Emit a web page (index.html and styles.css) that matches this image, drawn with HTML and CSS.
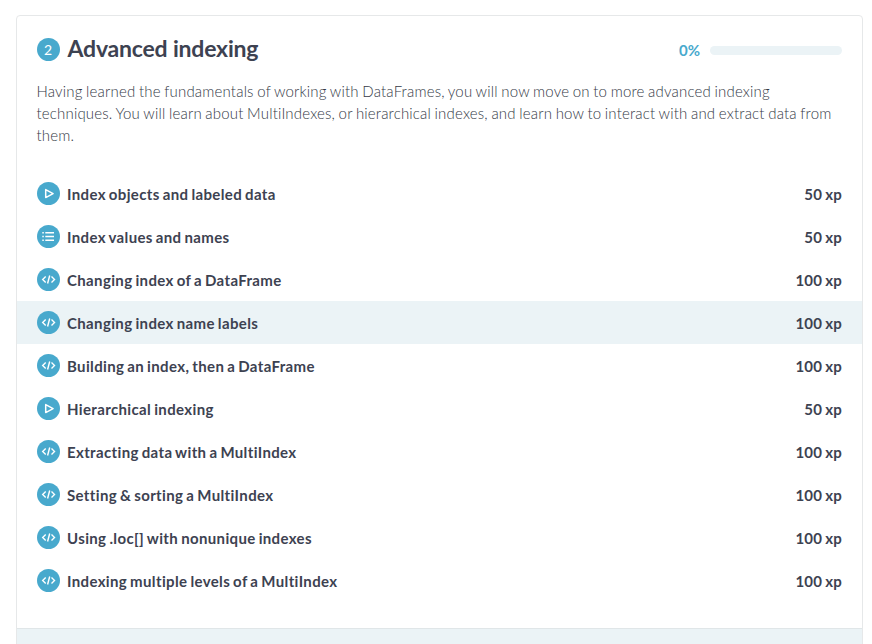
FILE: index.html
```html
<!DOCTYPE html>
<html lang="en">
<head>
<meta charset="utf-8">
<title>Advanced indexing</title>
<link rel="stylesheet" href="styles.css">
</head>
<body>
<svg class="defs" aria-hidden="true">
<symbol id="play" viewBox="0 0 23 23"><circle cx="11.5" cy="11.5" r="11.5" fill="#48a9cd"/><path d="M8.7 7.6v8l7.4-4z" fill="none" stroke="#fff" stroke-width="1.5" stroke-linejoin="round"/></symbol>
<symbol id="list" viewBox="0 0 23 23"><circle cx="11.5" cy="11.5" r="11.5" fill="#48a9cd"/><path d="M5.3 7.7h1.5M8.3 7.7h8.7M5.3 11.5h1.5M8.3 11.5h8.7M5.3 15.3h1.5M8.3 15.3h8.7" fill="none" stroke="#fff" stroke-width="1.5"/></symbol>
<symbol id="code" viewBox="0 0 23 23"><circle cx="11.5" cy="11.5" r="11.5" fill="#48a9cd"/><path d="M8.7 8.6l-3 2.9 3 2.9M14.5 8.6l3 2.9-3 2.9M12.7 7.5l-2.1 8" fill="none" stroke="#fff" stroke-width="1.4"/></symbol>
</svg>
<main class="chapter">
<header class="head"><span class="number">2</span><h1>Advanced indexing</h1><span class="percent">0%</span><span class="track"></span></header>
<p class="intro">Having learned the fundamentals of working with DataFrames, you will now move on to more advanced indexing techniques. You will learn about MultiIndexes, or hierarchical indexes, and learn how to interact with and extract data from them.</p>
<ul class="lessons">
<li><svg class="icon"><use href="#play"/></svg><span class="name">Index objects and labeled data</span><span class="xp">50 xp</span></li>
<li><svg class="icon"><use href="#list"/></svg><span class="name">Index values and names</span><span class="xp">50 xp</span></li>
<li><svg class="icon"><use href="#code"/></svg><span class="name">Changing index of a DataFrame</span><span class="xp">100 xp</span></li>
<li class="active"><svg class="icon"><use href="#code"/></svg><span class="name">Changing index name labels</span><span class="xp">100 xp</span></li>
<li><svg class="icon"><use href="#code"/></svg><span class="name">Building an index, then a DataFrame</span><span class="xp">100 xp</span></li>
<li><svg class="icon"><use href="#play"/></svg><span class="name">Hierarchical indexing</span><span class="xp">50 xp</span></li>
<li><svg class="icon"><use href="#code"/></svg><span class="name">Extracting data with a MultiIndex</span><span class="xp">100 xp</span></li>
<li><svg class="icon"><use href="#code"/></svg><span class="name">Setting &amp; sorting a MultiIndex</span><span class="xp">100 xp</span></li>
<li><svg class="icon"><use href="#code"/></svg><span class="name">Using .loc[] with nonunique indexes</span><span class="xp">100 xp</span></li>
<li><svg class="icon"><use href="#code"/></svg><span class="name">Indexing multiple levels of a MultiIndex</span><span class="xp">100 xp</span></li>
</ul>
<footer class="foot"></footer>
</main>
</body>
</html>
```
FILE: styles.css
```css
* { box-sizing: border-box; }
body { margin: 0; background: #fff; color: #3d4251; font-family: Lato, "Liberation Sans", sans-serif; overflow: hidden; }
.defs { display: none; }
.chapter { display: flex; flex-direction: column; width: 847px; height: 660px; margin: 15px 0 0 16px; border: 1px solid #e6e8e9; border-radius: 4px; }
.head { display: flex; align-items: center; height: 30px; margin: 18px 20px 0; }
.number { width: 23px; height: 23px; border-radius: 50%; background: #48a9cd; color: #fff; font-size: 14px; line-height: 23px; text-align: center; padding-right: 1px; }
h1 { flex: 1; margin: -2px 0 0 7.5px; font-size: 23px; line-height: 30px; font-weight: 700; letter-spacing: -0.19px; }
.percent { margin: 2px 10px 0 0; color: #48a9cd; font-size: 15px; font-weight: 700; }
.track { width: 132px; height: 9px; margin-top: 2px; border-radius: 5px; background: #ebf3f6; }
.intro { margin: 16px 11px 0 19.5px; padding-right: 8px; color: #343946; font-size: 15px; line-height: 22px; font-weight: 300; letter-spacing: 0.18px; word-spacing: -0.7px; }
.lessons { list-style: none; margin: 26px 0 0; padding: 0; font-size: 15px; font-weight: 700; }
.lessons li { display: flex; flex: none; align-items: center; height: 43px; padding: 0 20px; }
.lessons .active { background: #ebf3f6; }
.icon { width: 23px; height: 23px; margin-right: 7px; margin-bottom: 1px; }
.name { flex: 1; letter-spacing: 0.36px; word-spacing: -1px; }
.xp { letter-spacing: 0.2px; word-spacing: -0.7px; }
.foot { flex: 1; margin-top: 26px; border-top: 1px solid #e0e6e8; background: #ebf3f6; }
```
